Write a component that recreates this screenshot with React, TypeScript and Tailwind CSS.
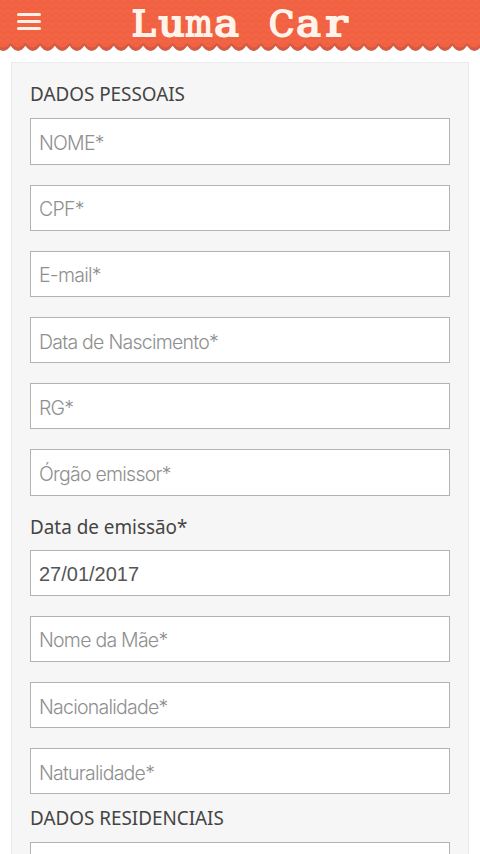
interface FieldProps {
  label: string;
  defaultValue?: string;
}

function Field({ label, defaultValue }: FieldProps) {
  return (
    <input
      type="text"
      aria-label={label}
      placeholder={defaultValue ? undefined : label}
      defaultValue={defaultValue}
      className={`block h-[46.2px] w-full border border-[#b3b3b3] bg-white px-2 outline-none ${
        defaultValue
          ? "pt-[3px] font-['Liberation_Sans',sans-serif] text-[20px] text-[#555]"
          : "pt-[3px] font-['Inter','Liberation_Sans',sans-serif] text-[19.5px] font-light tracking-[-0.75px] placeholder:text-[#8f8f8f]"
      }`}
    />
  );
}

function SectionTitle({ text }: { text: string }) {
  return (
    <h2 className="origin-left scale-x-[0.943] whitespace-nowrap text-[20px] leading-[28px] text-[#444]">
      {text}
    </h2>
  );
}

// Lower edge of the header: a row of scallops
const STEP = 14.72;
const START = 10.7 - STEP;

function scallops(cuspY: number, depth: number) {
  let d = `M${START} 0V${cuspY}`;
  for (let i = 0; i < 34; i++) {
    d += `q${STEP / 2} ${depth * 2} ${STEP} 0`;
  }
  return d + "V0Z";
}

// Each letter of the logo is stretched to fill a cell of equal width
const LOGO = [
  { char: "L", stretch: "scale-x-[1.02]" },
  { char: "u", stretch: "scale-x-[1.14]" },
  { char: "m", stretch: "scale-x-[0.81]" },
  { char: "a", stretch: "scale-x-[1.16]" },
  { char: " ", stretch: "scale-x-100" },
  { char: "C", stretch: "scale-x-[0.93]" },
  { char: "a", stretch: "scale-x-[1.16]" },
  { char: "r", stretch: "scale-x-[1.3]" },
];

function Header() {
  return (
    <header className="relative h-[52px] w-full">
      <svg className="absolute inset-0" width="480" height="54" viewBox="0 0 480 54">
        <defs>
          <pattern id="weave" width="8" height="6" patternUnits="userSpaceOnUse">
            <rect width="8" height="6" fill="#f26444" />
            <path d="M0 1l4 3 4-3" fill="none" stroke="#ee5f41" strokeWidth="1.2" />
          </pattern>
        </defs>
        <path d={scallops(45.8, 5.2)} fill="#cb6250" />
        <path d={scallops(44.4, 4.8)} fill="#d9573c" />
        <path d={scallops(42.8, 4.6)} fill="url(#weave)" />
      </svg>
      <button type="button" aria-label="Menu" className="absolute left-[17px] top-[13px] flex flex-col gap-[4px]">
        <span className="h-[3px] w-6 rounded-sm bg-[#fff1e8]" />
        <span className="h-[3px] w-6 rounded-sm bg-[#fff1e8]" />
        <span className="h-[3px] w-6 rounded-sm bg-[#fff1e8]" />
      </button>
      <h1 className="relative whitespace-pre pt-[2px] text-center font-['DejaVu_Serif',serif] text-[35.5px] leading-[44px] text-[#fff3ea] [-webkit-text-stroke:1.9px_#fff3ea]">
        {LOGO.map(({ char, stretch }, i) => (
          <span key={i} className="inline-flex w-[27.6px] justify-center">
            <span className={stretch}>{char}</span>
          </span>
        ))}
      </h1>
    </header>
  );
}

function App() {
  return (
    <div className="h-[854px] w-[480px] overflow-hidden bg-white font-['Noto_Sans',sans-serif]">
      <Header />
      <main className="mx-[11px] mt-[10px] h-[900px] border border-[#ebebeb] bg-[#f6f6f6] px-[18px] pt-[17px]">
        <SectionTitle text="DADOS PESSOAIS" />
        <div className="mt-[10.4px] flex flex-col gap-5">
          <Field label="NOME*" />
          <Field label="CPF*" />
          <Field label="E-mail*" />
          <Field label="Data de Nascimento*" />
          <Field label="RG*" />
          <Field label="Órgão emissor*" />
        </div>
        <div className="mt-[17px]">
          <SectionTitle text="Data de emissão*" />
        </div>
        <div className="mt-[9.2px] flex flex-col gap-5">
          <Field label="Data de emissão*" defaultValue="27/01/2017" />
          <Field label="Nome da Mãe*" />
          <Field label="Nacionalidade*" />
          <Field label="Naturalidade*" />
        </div>
        <div className="mt-[10px]">
          <SectionTitle text="DADOS RESIDENCIAIS" />
        </div>
        <div className="mt-[10px]">
          <Field label="CEP" defaultValue=" " />
        </div>
      </main>
    </div>
  );
}

export default App;
